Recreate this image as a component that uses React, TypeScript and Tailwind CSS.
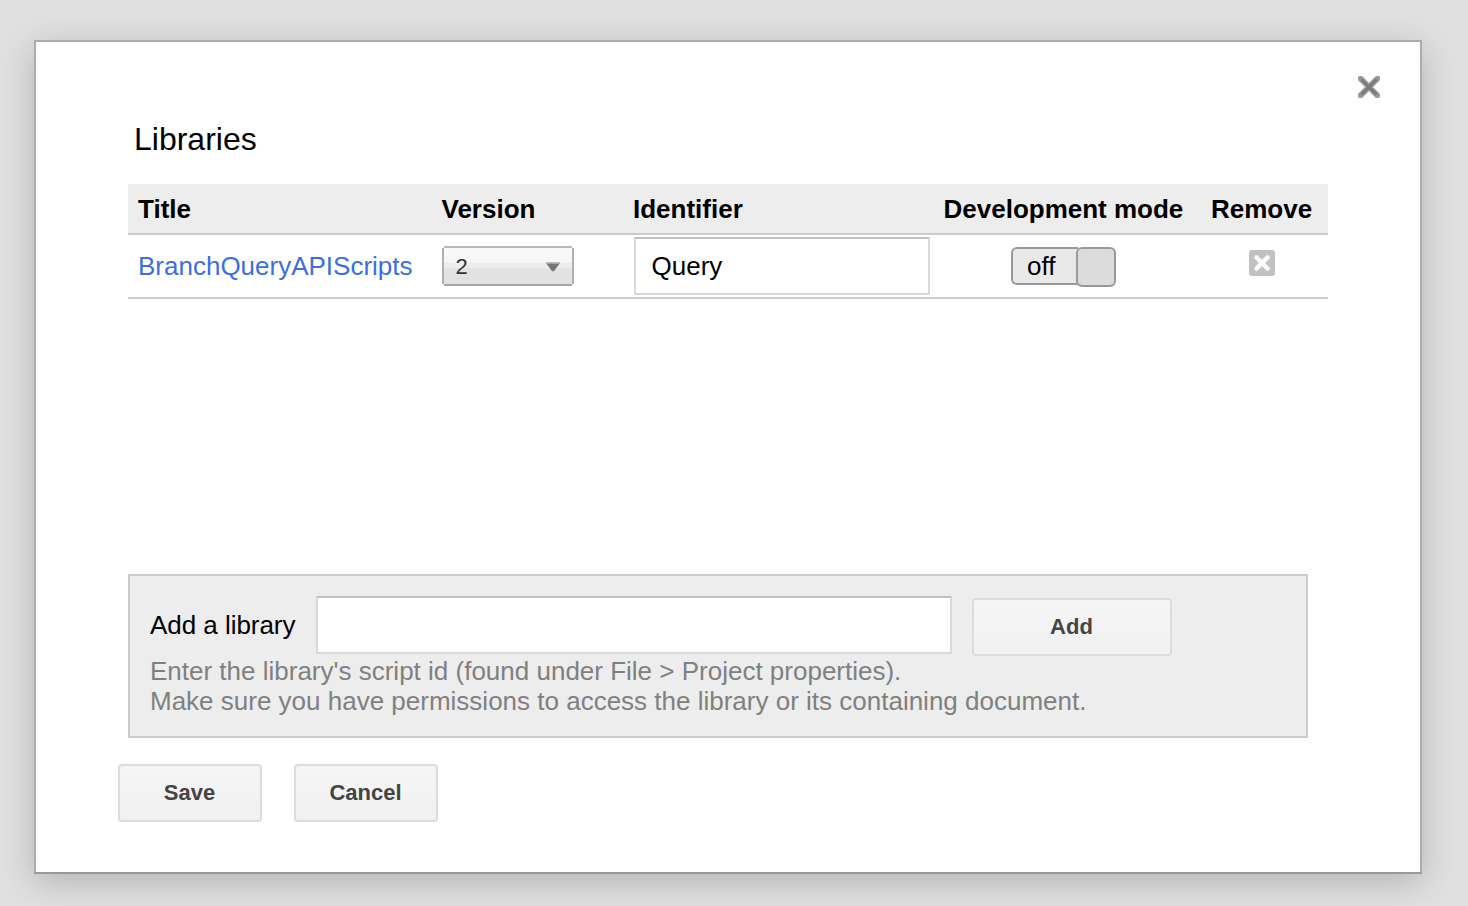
import React from 'react';

const inputBorder =
  'border-2 border-solid border-t-[#c0c0c0] border-r-[#d9d9d9] border-b-[#d9d9d9] border-l-[#d9d9d9] bg-white outline-none';

function Button({ label, className }: { label: string; className: string }) {
  return (
    <button
      type="button"
      className={`flex h-[58px] justify-center rounded-[4px] border-2 border-[#dcdcdc] bg-linear-to-b from-[#f5f5f5] to-[#f1f1f1] pt-3.5 pr-px text-[22px] leading-[25px] font-bold text-[#444] ${className}`}
    >
      {label}
    </button>
  );
}

function CloseIcon() {
  return (
    <svg width="22" height="22" viewBox="0 0 22 22" className="block">
      <path d="M2.5 2.5 19.5 19.5M19.5 2.5 2.5 19.5" stroke="#c4c4c4" strokeWidth="6.4" strokeLinecap="round" />
      <path d="M2.5 2.5 19.5 19.5M19.5 2.5 2.5 19.5" stroke="#959595" strokeWidth="4.6" strokeLinecap="round" />
      <path d="M3.5 3.5 18.5 18.5M18.5 3.5 3.5 18.5" stroke="#7a7a7a" strokeWidth="2.8" />
    </svg>
  );
}

function RemoveIcon() {
  return (
    <svg width="26" height="26" viewBox="0 0 26 26" className="block">
      <rect width="26" height="26" rx="3" fill="#c1c1c1" />
      <path d="M7.5 7.5 18.5 18.5M18.5 7.5 7.5 18.5" stroke="#e6e6e6" strokeWidth="5" strokeLinecap="round" />
      <path d="M7.5 7.5 18.5 18.5M18.5 7.5 7.5 18.5" stroke="#fff" strokeWidth="3.4" strokeLinecap="round" />
    </svg>
  );
}

function VersionSelect() {
  return (
    <button type="button" className="flex h-10 w-[132px] flex-col text-left" aria-label="Version">
      <span className="mx-0.5 h-0.5 w-32 bg-[#b8b8b8]" />
      <span className="flex h-9 w-full justify-between border-x-2 border-[#b0b0b0] bg-[linear-gradient(#f9f9f9_0px,#f6f6f6_15px,#ececec_15px,#ececec_20px,#e3e3e3_20px,#e1e1e1_36px)] pt-1.5 pr-3 pl-[11.5px] text-[22px] leading-[25px] text-[#333]">
        2
        <svg width="14" height="10" viewBox="0 0 14 10" className="mt-2">
          <path d="M0 1H14L8 9.2H6L0 1Z" fill="#777" />
          <path d="M0 0.3H14V2H0Z" fill="#a5a5a5" />
        </svg>
      </span>
      <span className="mx-0.5 h-0.5 w-32 bg-[#a6a6a6]" />
    </button>
  );
}

function Toggle() {
  return (
    <div className="flex h-10 w-[105px] items-start">
      <div className="h-[38px] w-[67px] rounded-l-[6px] border-2 border-r-0 border-[#999] bg-[#e9e9e9] pt-0.5 pl-3.5 leading-[30px]">
        off
      </div>
      <div className="-ml-0.5 h-10 w-10 rounded-[6px] border-2 border-[#999] bg-[#dcdcdc]" />
    </div>
  );
}

const columns = 'grid grid-cols-[304px_192px_310px_268px_126px]';

export default function App() {
  return (
    <div className="h-[906px] w-full overflow-hidden bg-[#e0e0e0] px-[34px] pt-10 font-['Liberation_Sans',Arial,sans-serif] text-[26px] leading-[30px] text-black">
      <div
        role="dialog"
        className="flex h-[834px] w-[1388px] flex-col border-2 border-[#acacac] border-b-[#999] bg-white shadow-[0_8px_32px_rgba(0,0,0,0.2)]"
      >
        <div className="flex h-[79px] justify-end pt-[34px] pr-10">
          <button type="button" aria-label="Close" className="h-[22px] w-[22px]">
            <CloseIcon />
          </button>
        </div>
        <h1 className="h-[63px] pl-[98px] text-[32px] leading-9">Libraries</h1>

        <div className="ml-[92px] h-[390px] w-[1200px]">
          <div className={`${columns} h-[51px] border-b-2 border-[#cbcbcb] bg-[#ededed] pt-2.5 font-bold whitespace-nowrap`}>
            <div className="pl-2.5">Title</div>
            <div className="pl-[9.5px]">Version</div>
            <div className="pl-[9px]">Identifier</div>
            <div className="pl-[9.5px]">Development mode</div>
            <div className="pl-[9px]">Remove</div>
          </div>
          <div className={`${columns} h-16 border-b-2 border-[#cbcbcb]`}>
            <div className="pt-4 pl-2.5">
              <a className="text-[#3b6fde]">BranchQueryAPIScripts</a>
            </div>
            <div className="pt-[11px] pl-2.5">
              <VersionSelect />
            </div>
            <div className="pt-0.5 pl-2.5">
              <input defaultValue="Query" className={`${inputBorder} block h-[58px] w-[296px] px-[15.5px]`} />
            </div>
            <div className="pt-3 pl-[77px]">
              <Toggle />
            </div>
            <div className="pt-[15px] pl-[47px]">
              <RemoveIcon />
            </div>
          </div>
        </div>

        <div className="ml-[92px] h-[164px] w-[1180px] border-2 border-[#cbcbcb] bg-[#ededed] pt-5 pl-5">
          <div className="flex h-[60px] items-start">
            <label className="w-[166px] pt-3.5 tracking-[-0.04px]">Add a library</label>
            <input className={`${inputBorder} block h-[58px] w-[636px] px-4`} />
            <Button label="Add" className="mt-0.5 ml-5 w-[200px]" />
          </div>
          <p className="whitespace-nowrap text-[#808080]">
            Enter the library's script id (found under File &gt; Project properties).
            <br />
            Make sure you have permissions to access the library or its containing document.
          </p>
        </div>

        <div className="mt-[26px] ml-[82px] flex gap-8">
          <Button label="Save" className="w-36" />
          <Button label="Cancel" className="w-36" />
        </div>
      </div>
    </div>
  );
}
